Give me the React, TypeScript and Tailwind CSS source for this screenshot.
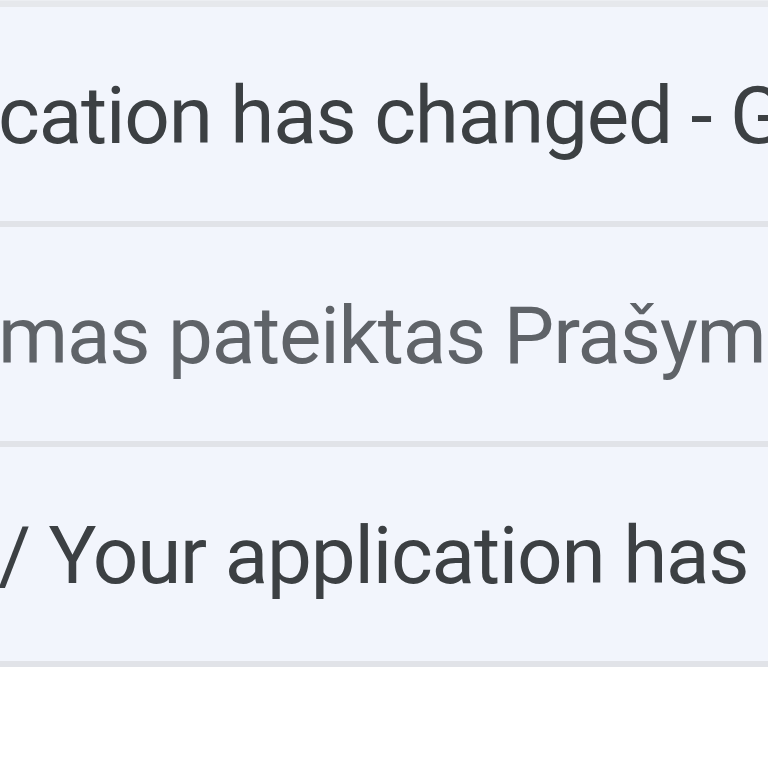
const rows = [
  { text: "cation has changed - Galimybė", tone: "text-[#3c4043]" },
  { text: "mas pateiktas Prašymas", tone: "text-[#5f6368]" },
  { text: "/ Your application has changed", tone: "text-[#3c4043]" },
];

const MailRow = ({ text, tone }: { text: string; tone: string }) => {
  return (
    <div className="h-[220px] w-full overflow-hidden bg-[#f2f5fc] border-b-[6px] border-[#e1e3e8]">
      <div className="pt-[69px] ml-[-2px]">
        <span
          className={`whitespace-nowrap text-[80px] leading-none tracking-[-1.2px] font-normal ${tone}`}
          style={{ fontFamily: "Roboto, 'Noto Sans', Arial, sans-serif" }}
        >
          {text}
        </span>
      </div>
    </div>
  );
};

export default function App() {
  return (
    <div className="h-[768px] w-[768px] overflow-hidden bg-white">
      <div className="h-[1px] bg-[#eceef2]" />
      <div className="h-[6px] bg-[#e6e8ec]" />
      {rows.map((r) => (
        <MailRow key={r.text} {...r} />
      ))}
    </div>
  );
}
